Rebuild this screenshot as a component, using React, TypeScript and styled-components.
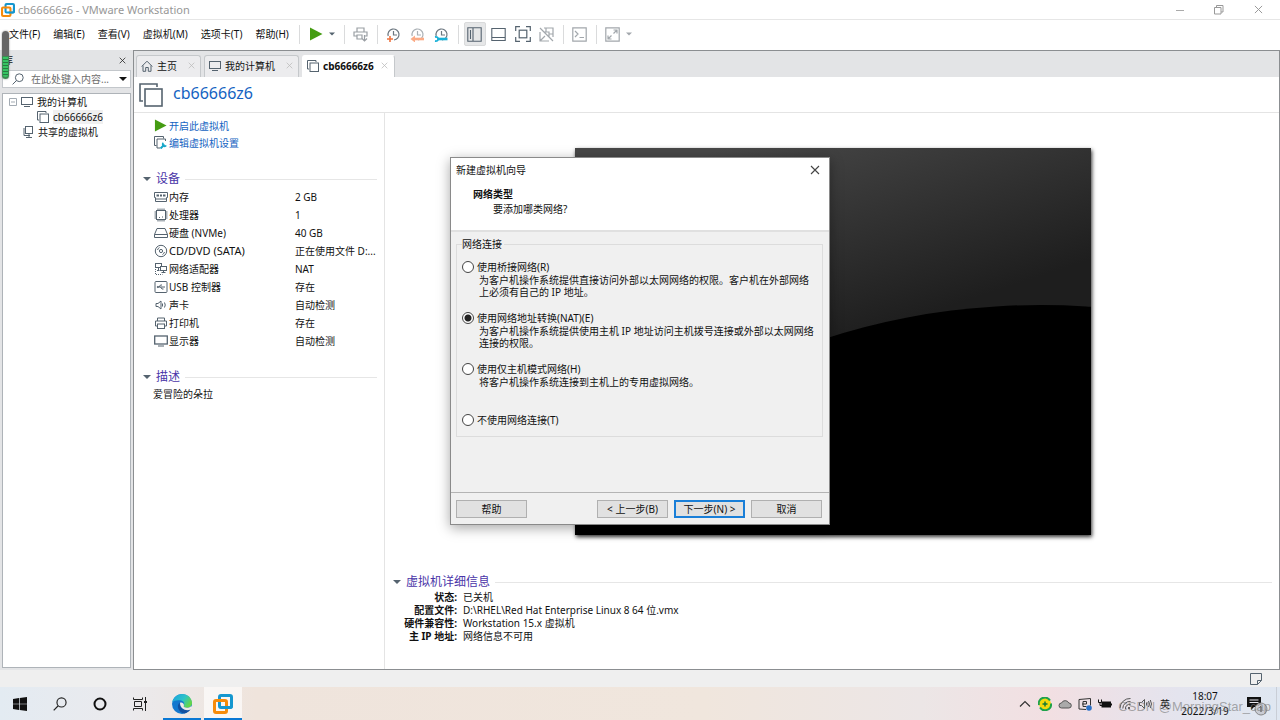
import React from "react";
import styled, { createGlobalStyle } from "styled-components";

const INK = "#55636f";
const FONT = '"Noto Sans", "Noto Sans CJK SC", sans-serif';

const GlobalStyle = createGlobalStyle`
  * { box-sizing: border-box; }
  body {
    margin: 0;
    background: #fff;
    color: #111;
    font-family: ${FONT};
    font-size: 10px;
    line-height: 14px;
  }
  button, input, select { font-family: inherit; font-size: inherit; line-height: inherit; color: inherit; }
  h1, h2, p { margin: 0; font-weight: 400; }
  svg { display: block; flex: none; }
`;

const Desktop = styled.div`
  position: relative;
  display: flex;
  flex-direction: column;
  min-height: 100vh;
`;

const PlainButton = styled.button`
  display: flex;
  align-items: center;
  justify-content: center;
  border: 0;
  padding: 0;
  background: none;
  white-space: nowrap;
`;

/* ---------- title bar ---------- */
const TitleBar = styled.header`
  display: flex;
  align-items: center;
  height: 20px;
  padding: 0 10px 0 1px;
  gap: 3px;
  border-bottom: 1px solid #e6e6e6;
  color: #979797;
`;
const WindowTitle = styled.h1`
  flex: 1;
  font-size: 11px;
  line-height: 14px;
`;
const WindowControls = styled.div`
  display: flex;
  gap: 15px;
`;
const WindowButton = styled(PlainButton)`
  width: 24px;
  height: 18px;
`;

/* ---------- menu and tool bar ---------- */
const CommandBar = styled.div`
  display: flex;
  align-items: center;
  height: 30px;
  padding: 0 0 2px 9px;
`;
const MenuBar = styled.nav`
  display: flex;
  gap: 13px;
  margin-right: 6px;
`;
const ToolBar = styled.div`
  display: flex;
  align-items: center;
`;
const ToolButton = styled(PlainButton)<{ $on?: boolean }>`
  width: 22px;
  height: 24px;
  margin: 0 1px;
  border-radius: 2px;
  border: 1px solid ${(p) => (p.$on ? "#d9dadb" : "transparent")};
  background: ${(p) => (p.$on ? "#e6e7e8" : "none")};
`;
const CaretButton = styled(PlainButton)`
  width: 8px;
  height: 20px;
  margin-right: 4px;
`;
const Separator = styled.span`
  width: 1px;
  height: 19px;
  margin: 0 4px;
  background: #dadbdc;
`;

/* ---------- frame ---------- */
const Body = styled.div`
  display: flex;
  flex: 1;
  background: #e3e4e6;
`;
const Sidebar = styled.aside`
  display: flex;
  flex-direction: column;
  width: 133px;
  padding: 0 2px 2px;
`;
const SidebarHead = styled.div`
  display: flex;
  align-items: center;
  justify-content: space-between;
  height: 20px;
  padding: 0 5px 0 1px;
`;
const SearchBox = styled.label`
  display: flex;
  align-items: center;
  height: 18px;
  padding: 0 3px 0 9px;
  gap: 4px;
  border: 1px solid #c3c7cb;
  background: #fff;
`;
const SearchInput = styled.input`
  flex: 1;
  min-width: 0;
  padding: 0 0 0 3px;
  border: 0;
  outline: 0;
  background: none;
  &::placeholder { color: #6d6d6d; opacity: 1; }
`;
const Tree = styled.ul`
  flex: 1;
  margin: 5px 0 0;
  padding: 0;
  list-style: none;
  border: 1px solid #aeb3b8;
  background: #fff;
`;
const TreeItem = styled.li<{ $indent: number }>`
  display: flex;
  align-items: center;
  height: 15px;
  padding-left: ${(p) => p.$indent}px;
  gap: 4px;
`;
const TreeName = styled.span<{ $selected?: boolean }>`
  background: ${(p) => (p.$selected ? "#f0f0f0" : "none")};
`;
const RecorderMeter = styled.div`
  position: absolute;
  left: 2px;
  top: 31px;
  width: 7px;
  height: 48px;
  border-radius: 4px;
  background: linear-gradient(#666 0 25px, #3d8a52 25px);
  box-shadow: 0 0 2px #8a8a8a;
`;
const MeterBars = styled.div`
  margin: 26px 1px 0;
  height: 20px;
  border-radius: 0 0 3px 3px;
  background: repeating-linear-gradient(#35c463 0 2px, #287a41 2px 3px);
`;

/* ---------- work area ---------- */
const Workspace = styled.main`
  display: flex;
  flex: 1;
  flex-direction: column;
  min-width: 0;
  border: 1px solid #8b8e91;
  background: #fff;
`;
const TabStrip = styled.div`
  display: flex;
  align-items: flex-end;
  height: 26px;
  gap: 3px;
  padding-left: 2px;
  background: #e3e4e6;
`;
const Tab = styled.div<{ $active?: boolean }>`
  display: flex;
  align-items: center;
  height: 22px;
  padding: 0 2px 2px 4px;
  gap: ${(p) => (p.$active ? 4 : 7)}px;
  border: 1px solid ${(p) => (p.$active ? "#fff" : "#c5c8cb")};
  border-right-color: #c5c8cb;
  border-bottom: 0;
  border-radius: 3px 3px 0 0;
  background: ${(p) => (p.$active ? "#fff" : "#ececee")};
  font-weight: ${(p) => (p.$active ? 700 : 400)};
`;
const TabName = styled(PlainButton)`
  gap: 4px;
  font-weight: inherit;
`;
const TabClose = styled(PlainButton)`
  width: 14px;
  height: 14px;
`;
const VmHeader = styled.div`
  display: flex;
  align-items: center;
  height: 36px;
  padding: 0 5px;
  gap: 10px;
  border-bottom: 1px solid #e4e4e4;
`;
const VmName = styled.h2`
  font-size: 16px;
  line-height: 20px;
  padding-bottom: 4px;
  color: #1463c2;
`;
const Columns = styled.div`
  display: flex;
  flex: 1;
`;
const InfoColumn = styled.section`
  width: 251px;
  padding: 4px 7px 0 9px;
  border-right: 1px solid #e4e4e4;
`;
const Commands = styled.div`
  display: flex;
  flex-direction: column;
  padding-left: 11px;
`;
const CommandLink = styled.a`
  display: flex;
  align-items: center;
  height: 17px;
  gap: 2px;
  color: #1463c2;
  text-decoration: none;
`;
const SectionTitle = styled.h2`
  display: flex;
  align-items: center;
  height: 18px;
  gap: 5px;
  font-size: 12px;
  line-height: 18px;
  color: #4a35a8;
  &::after {
    content: "";
    flex: 1;
    height: 1px;
    background: #e6e6e6;
  }
`;
const Section = styled.div<{ $top: number }>`
  margin-top: ${(p) => p.$top}px;
`;
const DeviceTable = styled.table`
  width: 100%;
  border-collapse: collapse;
  th, td { height: 18px; padding: 0; text-align: left; font-weight: 400; white-space: nowrap; }
  th { width: 151px; padding-left: 11px; }
  td { padding-left: 1px; }
`;
const DeviceName = styled.span<{ $latin: boolean }>`
  display: flex;
  align-items: center;
  gap: 1px;
  font-size: ${(p) => (p.$latin ? 11 : 10)}px;
`;
const Description = styled.p`
  padding: 1px 0 0 10px;
`;
const PreviewColumn = styled.section`
  display: flex;
  flex: 1;
  flex-direction: column;
  justify-content: space-between;
  padding: 35px 7px 26px 8px;
`;
const Screen = styled.div`
  align-self: center;
  width: 516px;
  height: 387px;
  background: #000;
  box-shadow: 1px 2px 4px #333;
`;
const DetailTable = styled.table`
  border-collapse: collapse;
  th, td { height: 13px; padding: 0; line-height: 13px; text-align: left; white-space: nowrap; }
  th { width: 64px; text-align: right; font-weight: 700; }
  td { padding-left: 6px; }
`;

/* ---------- wizard ---------- */
const Wizard = styled.form`
  position: absolute;
  top: 157px;
  left: calc(50% - 190px);
  width: 380px;
  border: 1px solid #8a8a8a;
  background: #f0f0f0;
  box-shadow: 0 3px 12px rgba(0, 0, 0, 0.35);
`;
const WizardHead = styled.div`
  padding: 4px 5px 13px;
  border-bottom: 2px solid #e0e0e0;
  background: #fff;
`;
const WizardCaption = styled.div`
  display: flex;
  align-items: center;
  justify-content: space-between;
  height: 16px;
  padding-right: 4px;
`;
const WizardTitle = styled.h2`
  margin: 9px 0 0 17px;
  font-size: 10px;
  line-height: 15px;
  font-weight: 700;
`;
const WizardHint = styled.p`
  padding-left: 37px;
  line-height: 15px;
`;
const Options = styled.fieldset`
  margin: 5px 6px 55px 5px;
  padding: 9px 0 9px 5px;
  border: 1px solid #dcdcdc;
`;
const Legend = styled.legend`
  padding: 0 2px 0 0;
`;
const Option = styled.div<{ $last?: boolean }>`
  height: ${(p) => (p.$last ? 14 : 51)}px;
`;
const OptionLabel = styled.label`
  display: flex;
  align-items: center;
  gap: 3px;
`;
const Radio = styled.input`
  appearance: none;
  width: 12px;
  height: 12px;
  margin: 0;
  border: 1px solid #444;
  border-radius: 50%;
  background: #fff;
  &:checked { background: radial-gradient(circle, #222 0 3px, #fff 4px); }
`;
const OptionText = styled.p`
  padding-left: 17px;
  line-height: 12px;
  white-space: nowrap;
`;
const WizardFoot = styled.div`
  display: flex;
  gap: 6px;
  padding: 7px 7px 6px 5px;
  border-top: 1px solid #b4b4b4;
`;
const WizardButton = styled(PlainButton)<{ $primary?: boolean; $apart?: boolean }>`
  width: 71px;
  height: 18px;
  margin-right: ${(p) => (p.$apart ? "auto" : 0)};
  border: ${(p) => (p.$primary ? "2px solid #1a7fd8" : "1px solid #b0b0b0")};
  background: #e1e1e1;
`;

/* ---------- bottom bars ---------- */
const StatusBar = styled.div`
  display: flex;
  align-items: center;
  justify-content: flex-end;
  height: 17px;
  padding-right: 18px;
  background: #efefef;
`;
const TaskBar = styled.footer`
  position: relative;
  display: flex;
  height: 33px;
  padding-right: 3px;
  background: linear-gradient(90deg, #e3ebf2 0, #ebeaed 10%, #efe4dc 20%, #f0e6dd 55%, #ece6e6 72%, #f2dfe2 82%, #e4e4ee 92%, #dfe7f1 100%);
`;
const TaskButton = styled(PlainButton)<{ $open?: boolean; $front?: boolean }>`
  width: ${(p) => (p.$open ? 38 : 40)}px;
  margin-left: ${(p) => (p.$open ? 3 : 0)}px;
  border-top: 2px solid transparent;
  border-bottom: 2px solid ${(p) => (p.$open ? "#0a78d4" : "transparent")};
  background: ${(p) => (p.$front ? "rgba(255,255,255,.65)" : "none")};
`;
const Tray = styled.div`
  display: flex;
  align-items: center;
  margin-left: auto;
`;
const TrayButton = styled(PlainButton)`
  width: 20px;
  height: 33px;
`;
const Clock = styled.time`
  width: 60px;
  font-size: 10px;
  line-height: 15px;
  text-align: center;
`;
const NoticeButton = styled(PlainButton)`
  width: 42px;
  border-right: 1px solid #c9ced6;
  height: 33px;
`;
const Watermark = styled.span`
  position: absolute;
  right: 9px;
  bottom: 4px;
  font-family: "Liberation Sans", sans-serif;
  font-size: 13px;
  line-height: 18px;
  color: rgba(120, 120, 120, 0.62);
`;

/* ---------- drawings ---------- */
type IconProps = { w?: number; h?: number; box?: string; color?: string; sw?: number; children: React.ReactNode };
const Icon = ({ w = 14, h = w, box = `0 0 ${w} ${h}`, color = INK, sw = 1, children }: IconProps) => (
  <svg width={w} height={h} viewBox={box} fill="none" stroke={color} strokeWidth={sw} aria-hidden="true">
    {children}
  </svg>
);
const VmwareLogo = ({ size = 14 }: { size?: number }) => (
  <Icon w={size} box="0 0 20 20" sw={3}>
    <rect x="6.5" y="1.5" width="12" height="12" rx="1.5" stroke="#1597cf" />
    <rect x="1.5" y="6.5" width="12" height="12" rx="1.5" stroke="#f68b0b" />
    <path d="M18.500 8v4a1.500 1.500 0 0 1-1.500 1.500h-6" stroke="#1597cf" />
  </Icon>
);
const Cross = ({ size, color }: { size: number; color: string }) => (
  <Icon w={size} box="0 0 10 10" color={color} sw={1.1}>
    <path d="M1 1l8 8M9 1l-8 8" />
  </Icon>
);
const Caret = ({ color = INK, w = 8 }: { color?: string; w?: number }) => (
  <Icon w={w} h={4} box="0 0 8 4" color="none">
    <path d="M0 0h8L4 4z" fill={color} />
  </Icon>
);
const Play = ({ size }: { size: number }) => (
  <Icon w={size} box="0 0 14 14" color="none">
    <path d="M1 .5v13L13.500 7z" fill="#459c12" />
  </Icon>
);
const VmIcon = ({ size = 12, sw = 1 }: { size?: number; sw?: number }) => (
  <Icon w={size} box="0 0 12 12" sw={sw}>
    <path d="M2 9H.5V.5H9V2" />
    <rect x="3" y="3" width="8.500" height="8.500" />
  </Icon>
);
const MonitorIcon = ({ w = 12 }: { w?: number }) => (
  <Icon w={w} h={11} box="0 0 12 11">
    <rect x=".5" y="1.500" width="11" height="7" />
    <path d="M3 10.500h6" />
  </Icon>
);
const SharedIcon = () => (
  <Icon w={11} h={12}>
    <rect x="2.500" y=".5" width="7" height="7" />
    <path d="M1 2v7.500h6M6 7.500v4M3 11.500h6" />
  </Icon>
);
const HomeIcon = () => (
  <Icon w={12}>
    <path d="M.7 6.500L6 1.200l5.300 5.300M2 5.500v5.800h2.700V7.500h2.600v3.800H10V5.500" />
  </Icon>
);
const Lens = ({ size = 12, color = INK }: { size?: number; color?: string }) => (
  <Icon w={size} box="0 0 12 12" color={color}>
    <circle cx="7.300" cy="4.700" r="3.900" />
    <path d="M4.500 7.500L.6 11.400" />
  </Icon>
);
const SettingsVmIcon = () => (
  <Icon w={13} box="0 0 13 13">
    <path d="M2.500 9.500h-2v-9h9v2" />
    <path d="M11.500 5V3H3v9h3" />
    <path d="M6.500 12.500l4-4" stroke="#16a6c9" strokeWidth="2" />
    <path d="M9.300 6.800a2 2 0 0 0 3 2.800" stroke="#16a6c9" strokeWidth="1.500" />
  </Icon>
);
const ClockFace = ({ color, children }: { color: string; children: React.ReactNode }) => (
  <Icon w={15} color={color}>
    <path d="M2.200 9A5.500 5.500 0 1 1 8 13" strokeWidth="1.200" />
    <path d="M7.500 4v4h3.500" strokeWidth="1.200" />
    {children}
  </Icon>
);

const deviceIcons = {
  memory: (
    <Icon>
      <path d="M.5 2.500h13v5h-1v4h-11v-4h-1zM1.500 9h11" />
      <path d="M2.500 5.500h2.500M6 5.500h2M9 5.500h2.500" strokeWidth="2.200" />
    </Icon>
  ),
  cpu: (
    <Icon>
      <rect x="2.500" y="2.500" width="9" height="9" />
      <path d="M4 .5v2M6 .5v2M8 .5v2M10 .5v2M4 11.500v2M6 11.500v2M8 11.500v2M10 11.500v2M.5 4h2M.5 6h2M.5 8h2M.5 10h2M11.500 4h2M11.500 6h2M11.500 8h2M11.500 10h2M5 9.500h1M8.500 9.500v-1" />
    </Icon>
  ),
  disk: (
    <Icon>
      <path d="M.5 8.500L3 2.500h8l2.500 6v3H.5zM.5 8.500h13" />
    </Icon>
  ),
  disc: (
    <Icon>
      <circle cx="7" cy="7" r="5.700" />
      <circle cx="7" cy="7" r="1.600" />
      <path d="M3.500 6a4 4 0 0 1 2-2.500M10.500 8a4 4 0 0 1-2 2.500" />
    </Icon>
  ),
  network: (
    <Icon>
      <rect x="1.500" y="1.500" width="6" height="4" />
      <rect x="6.500" y="4.500" width="6" height="4" fill="#fff" />
      <path d="M4.500 6v2M3 8.500h2.500M9.500 9v2M7.500 10.500h4" />
      <path d="M1.500 7v5.500h7" strokeDasharray="1 1" />
    </Icon>
  ),
  usb: (
    <Icon>
      <rect x="1" y="1.500" width="12" height="11" rx="1" />
      <path d="M3.500 7H11M5 7l1.500-2H8M6.500 7L8 9h1.500" />
      <circle cx="3.800" cy="7" r=".6" fill={INK} />
    </Icon>
  ),
  sound: (
    <Icon>
      <path d="M2 5.500h2L7 3v8L4 8.500H2zM8.500 5.500v3M10.500 4.500q1.500 2.500 0 5" />
    </Icon>
  ),
  printer: (
    <Icon>
      <path d="M3.500 5V2h7v3M3.500 10H1.500V5h11v5h-2" />
      <rect x="3.500" y="8" width="7" height="4.500" />
    </Icon>
  ),
  display: (
    <Icon>
      <rect x=".7" y="2" width="12.600" height="8" strokeWidth="1.300" />
      <path d="M4 12h6" />
    </Icon>
  ),
};

const menus = ["文件(F)", "编辑(E)", "查看(V)", "虚拟机(M)", "选项卡(T)", "帮助(H)"];
const devices: { icon: keyof typeof deviceIcons; name: string; value: string }[] = [
  { icon: "memory", name: "内存", value: "2 GB" },
  { icon: "cpu", name: "处理器", value: "1" },
  { icon: "disk", name: "硬盘 (NVMe)", value: "40 GB" },
  { icon: "disc", name: "CD/DVD (SATA)", value: "正在使用文件 D:..." },
  { icon: "network", name: "网络适配器", value: "NAT" },
  { icon: "usb", name: "USB 控制器", value: "存在" },
  { icon: "sound", name: "声卡", value: "自动检测" },
  { icon: "printer", name: "打印机", value: "存在" },
  { icon: "display", name: "显示器", value: "自动检测" },
];
const isLatin = (text: string) => /^[\x20-\x7e]+$/.test(text);
const details = [
  ["状态:", "已关机"],
  ["配置文件:", "D:\\RHEL\\Red Hat Enterprise Linux 8 64 位.vmx"],
  ["硬件兼容性:", "Workstation 15.x 虚拟机"],
  ["主 IP 地址:", "网络信息不可用"],
];
const networkOptions = [
  { id: "bridged", label: "使用桥接网络(R)", lines: ["为客户机操作系统提供直接访问外部以太网网络的权限。客户机在外部网络", "上必须有自己的 IP 地址。"] },
  { id: "nat", label: "使用网络地址转换(NAT)(E)", lines: ["为客户机操作系统提供使用主机 IP 地址访问主机拨号连接或外部以太网网络", "连接的权限。"] },
  { id: "hostonly", label: "使用仅主机模式网络(H)", lines: ["将客户机操作系统连接到主机上的专用虚拟网络。"] },
  { id: "none", label: "不使用网络连接(T)", lines: [] },
];

const MainTools = () => (
  <ToolBar>
    <Separator />
    <ToolButton aria-label="开启"><Play size={14} /></ToolButton>
    <CaretButton aria-label="电源选项"><Caret w={6} /></CaretButton>
    <Separator />
    <ToolButton aria-label="发送">
      <Icon w={15} color="#9a9fa4" sw={1.2}>
        <path d="M4 5V1h7v4M4 9H1V5h13v4h-3M4 8h5v4H4zM11.500 8v6M9 11.500l2.500 2.500 2.500-2.500" />
      </Icon>
    </ToolButton>
    <Separator />
    <ToolButton aria-label="拍摄快照"><ClockFace color="#6c7780"><path d="M4 9v6M1 12h6" stroke="#ef7440" strokeWidth="1.600" /></ClockFace></ToolButton>
    <ToolButton aria-label="恢复快照"><ClockFace color="#aab0b5"><path d="M14 12H4" stroke="#fbab86" strokeWidth="2.600" /><path d="M5 8.500v7L.5 12z" fill="#fbab86" stroke="none" /></ClockFace></ToolButton>
    <ToolButton aria-label="管理快照"><ClockFace color="#6c7780"><path d="M4 12h9.500" stroke="#19b1d8" strokeWidth="2.600" /><path d="M1 10q3-.5 3 2T1 14" stroke="#19b1d8" strokeWidth="1.800" /></ClockFace></ToolButton>
    <Separator />
    <ToolButton $on aria-label="显示库"><Icon w={15} sw={1.1}><path d="M.8.8h13.400v13.400H.8zM3.500 3v9M6 1v13" /></Icon></ToolButton>
    <ToolButton aria-label="显示缩略图"><Icon w={15} sw={1.1}><path d="M.8 1.500h13.400v12H.8zM1 10.500h13" /></Icon></ToolButton>
    <ToolButton aria-label="全屏"><Icon w={16} sw={1.2}><path d="M.7 5V.7H5M11 .7h4.300V5M15.300 11v4.300H11M5 15.300H.7V11" /><rect x="4.200" y="4.200" width="7.600" height="7.600" /></Icon></ToolButton>
    <ToolButton aria-label="Unity"><Icon w={15} color="#a2a7ac" sw={1.200}><path d="M5 1h9v9M10 14H1V5M5 5h5v5M1 1l13 13M1 14l5-5M7 1v4M14 7h-4" /></Icon></ToolButton>
    <Separator />
    <ToolButton aria-label="控制台"><Icon w={15} color="#a2a7ac" sw={1.200}><path d="M.8.8h13.400v13.400H.8zM3 4l3 3-3 3M7.500 10.500H12" /></Icon></ToolButton>
    <Separator />
    <ToolButton aria-label="自动适应"><Icon w={15} color="#a2a7ac" sw={1.200}><path d="M.8.8h13.400v13.400H.8zM8.500 6.500L12 3M8.500 3H12v3.500M6.500 8.500L3 12M3 8.500V12h3.500" /></Icon></ToolButton>
    <CaretButton aria-label="适应选项"><Caret w={6} color="#a2a7ac" /></CaretButton>
  </ToolBar>
);

const PreviewImage = () => (
  <svg width="100%" height="100%" viewBox="0 0 516 387" role="img" aria-label="虚拟机屏幕">
    <defs>
      <linearGradient id="sky" gradientUnits="userSpaceOnUse" x1="180" y1="-10" x2="250" y2="200">
        <stop offset="0" stopColor="#474747" />
        <stop offset="1" stopColor="#1e1e1e" />
      </linearGradient>
      <clipPath id="frame"><rect width="516" height="387" /></clipPath>
    </defs>
    <g clipPath="url(#frame)">
      <rect width="516" height="387" fill="url(#sky)" />
      <ellipse cx="466" cy="445" rx="460" ry="288" fill="#000" />
      <rect y="300" width="516" height="87" fill="#000" />
    </g>
  </svg>
);

const NetworkWizard = () => (
  <Wizard onSubmit={(e) => e.preventDefault()}>
    <WizardHead>
      <WizardCaption>
        <span>新建虚拟机向导</span>
        <PlainButton type="button" aria-label="关闭"><Cross size={10} color="#444" /></PlainButton>
      </WizardCaption>
      <WizardTitle>网络类型</WizardTitle>
      <WizardHint>要添加哪类网络?</WizardHint>
    </WizardHead>
    <Options>
      <Legend>网络连接</Legend>
      {networkOptions.map((o) => (
        <Option key={o.id} $last={o.id === "none"}>
          <OptionLabel>
            <Radio type="radio" name="network" value={o.id} defaultChecked={o.id === "nat"} />
            {o.label}
          </OptionLabel>
          {o.lines.map((line) => <OptionText key={line}>{line}</OptionText>)}
        </Option>
      ))}
    </Options>
    <WizardFoot>
      <WizardButton type="button" $apart>帮助</WizardButton>
      <WizardButton type="button">&lt; 上一步(B)</WizardButton>
      <WizardButton type="submit" $primary>下一步(N) &gt;</WizardButton>
      <WizardButton type="button">取消</WizardButton>
    </WizardFoot>
  </Wizard>
);

const WindowsTaskBar = () => (
  <TaskBar>
    <TaskButton aria-label="开始">
      <Icon w={14} color="none"><path d="M0 2l6-.9v5.600H0zM6.700 1L14 0v6.700H6.700zM0 7.300h6v5.600L0 12zM6.700 7.300H14V14l-7.300-1z" fill="#111" /></Icon>
    </TaskButton>
    <TaskButton aria-label="搜索"><Lens size={14} color="#222" /></TaskButton>
    <TaskButton aria-label="Cortana"><Icon w={14} color="#111" sw={2}><circle cx="7" cy="7" r="5.500" /></Icon></TaskButton>
    <TaskButton aria-label="任务视图">
      <Icon w={14} color="#222"><path d="M.5.5v2h9v-2M.5 13.500v-2h9v2M1.500 4.500h7v5h-7zM12.500 0v14" /><path d="M11 5h3" strokeWidth="2" /></Icon>
    </TaskButton>
    <TaskButton $open aria-label="Edge">
      <svg width="20" height="20" viewBox="0 0 20 20" aria-hidden="true">
        <defs>
          <linearGradient id="edgeTop" x1="0" y1="0" x2="1" y2="0.500">
            <stop offset="0" stopColor="#1a9fe0" /><stop offset=".6" stopColor="#2cc3c8" /><stop offset="1" stopColor="#63d64a" />
          </linearGradient>
        </defs>
        <circle cx="10" cy="10" r="10" fill="#1378cf" />
        <path d="M.2 8.500C1.200 3.500 5.200 0 10 0c5.700 0 10 4 10 8.800 0 3.200-2.300 5-5.200 5-2.300 0-3.600-1-3-1.900.9-1.300.8-4.500-2.600-5.300C5.500 5.700 1.800 6.500.2 8.500z" fill="url(#edgeTop)" />
        <path d="M7.800 8.500C4 11 6 18.500 12.500 19.600c2.800-.8 4.900-2.300 6.200-4.800-4.200 2.200-11.500.6-10.900-6.300z" fill="#1250a0" />
        <path d="M8 8.800c1.600-1.200 4.600.6 3.800 3.100-.6.9.7 1.900 3 1.900 1.500 0 3-.5 4.200-1.500l1.500.8c-.5 1.300-1 1.800-1.800 2.400-4.500 1.900-10.700-.3-10.700-6.700z" fill="#efe8e6" />
      </svg>
    </TaskButton>
    <TaskButton $open $front aria-label="VMware Workstation"><VmwareLogo size={20} /></TaskButton>
    <Tray>
      <TrayButton aria-label="显示隐藏的图标"><Icon w={12} color="#333" sw={1.200}><path d="M1 8.500l5-5 5 5" /></Icon></TrayButton>
      <TrayButton aria-label="360"><Icon w={14}><circle cx="7" cy="7" r="6" fill="#f5d90c" stroke="none" /><path d="M1 8A6 6 0 0 1 12 3.500M13 6.500A6 6 0 0 1 2 10.500" stroke="#1fa24a" strokeWidth="2" /><path d="M7 4.500v5M4.500 7h5" stroke="#147a34" strokeWidth="1.500" /></Icon></TrayButton>
      <TrayButton aria-label="OneDrive"><Icon w={14} color="#555"><path d="M3.500 11a2.500 2.500 0 0 1 0-5 4 4 0 0 1 7.300 0 2.500 2.500 0 0 1 0 5z" fill="#aaa" /></Icon></TrayButton>
      <TrayButton aria-label="输入面板"><Icon w={14} color="#333"><path d="M1 2.500l11.500-1v7M1 2.500v9.500l7 .5" /><path d="M4 7h4.500V4.500H5V9.500h3.500" /><circle cx="11" cy="11" r="2.800" fill="#2a70c8" stroke="none" /></Icon></TrayButton>
      <TrayButton aria-label="电池"><Icon w={14} color="#111"><rect x="4" y="5" width="8.500" height="5" fill="#111" /><path d="M13.500 6.500v2M.5 2.500v3h3v-3M2 5.500v3h2" /></Icon></TrayButton>
      <TrayButton aria-label="网络"><Icon w={13} color="#555"><path d="M1 11A10 10 0 0 1 11.500 1.500M3.800 11.500a7 7 0 0 1 7.700-7M6.500 12a4 4 0 0 1 5-4.500" /><circle cx="10" cy="11" r="1" fill="#333" stroke="none" /></Icon></TrayButton>
      <TrayButton aria-label="音量"><Icon w={14} color="#555"><path d="M1.500 5.500h2l3-3v9l-3-3h-2zM8.500 5.500v3M10.500 4q2 3 0 6M12.300 3q2.400 4 0 8" /></Icon></TrayButton>
      <TrayButton aria-label="输入法">英</TrayButton>
      <Clock>18:07<br />2022/3/19</Clock>
      <NoticeButton aria-label="1 条通知">
        <Icon w={24} h={24} color="none">
          <path d="M3 5h14v10h-7l-3 3v-3H3z" fill="#111" />
          <path d="M5.500 8h9M5.500 10.500h9" stroke="#e6e6ee" />
          <circle cx="17" cy="17" r="6" fill="#c9ccd4" stroke="#888" />
          <path d="M15.500 15.500l1.500-1V20" stroke="#444" />
        </Icon>
      </NoticeButton>
    </Tray>
    <Watermark>CSDN @MorningStar_cap</Watermark>
  </TaskBar>
);

export default function App() {
  return (
    <Desktop>
      <GlobalStyle />
      <TitleBar>
        <VmwareLogo />
        <WindowTitle>cb66666z6 - VMware Workstation</WindowTitle>
        <WindowControls>
          <WindowButton aria-label="最小化"><Icon w={10} color="#aaa"><path d="M1 5.500h8" /></Icon></WindowButton>
          <WindowButton aria-label="还原"><Icon w={10} color="#999"><path d="M.5 2.500h6.500V9H.5zM2.500 2.500v-2h6.500V7H7" /></Icon></WindowButton>
          <WindowButton aria-label="关闭"><Cross size={9} color="#999" /></WindowButton>
        </WindowControls>
      </TitleBar>
      <CommandBar>
        <MenuBar>{menus.map((m) => <PlainButton key={m}>{m}</PlainButton>)}</MenuBar>
        <MainTools />
      </CommandBar>
      <Body>
        <Sidebar>
          <SidebarHead>
            <span>库</span>
            <PlainButton aria-label="关闭库"><Cross size={7} color="#222" /></PlainButton>
          </SidebarHead>
          <SearchBox>
            <Lens />
            <SearchInput type="text" aria-label="搜索库" placeholder="在此处键入内容..." />
            <PlainButton aria-label="搜索选项"><Caret color="#111" /></PlainButton>
          </SearchBox>
          <Tree>
            <TreeItem $indent={6}>
              <Icon w={8} color="#a3abb3"><path d="M.5.5h7v7h-7zM2 4h4" /></Icon>
              <MonitorIcon />
              <TreeName>我的计算机</TreeName>
            </TreeItem>
            <TreeItem $indent={34}>
              <VmIcon />
              <TreeName $selected>cb66666z6</TreeName>
            </TreeItem>
            <TreeItem $indent={20}>
              <SharedIcon />
              <TreeName>共享的虚拟机</TreeName>
            </TreeItem>
          </Tree>
        </Sidebar>
        <Workspace>
          <TabStrip>
            <Tab>
              <TabName><HomeIcon />主页</TabName>
              <TabClose aria-label="关闭主页"><Cross size={7} color="#bbb" /></TabClose>
            </Tab>
            <Tab>
              <TabName><MonitorIcon />我的计算机</TabName>
              <TabClose aria-label="关闭我的计算机"><Cross size={7} color="#bbb" /></TabClose>
            </Tab>
            <Tab $active>
              <TabName><VmIcon />cb66666z6</TabName>
              <TabClose aria-label="关闭 cb66666z6"><Cross size={7} color="#bbb" /></TabClose>
            </Tab>
          </TabStrip>
          <VmHeader>
            <VmIcon size={24} sw={0.8} />
            <VmName>cb66666z6</VmName>
          </VmHeader>
          <Columns>
            <InfoColumn>
              <Commands>
                <CommandLink href="#power"><Play size={13} />开启此虚拟机</CommandLink>
                <CommandLink href="#settings"><SettingsVmIcon />编辑虚拟机设置</CommandLink>
              </Commands>
              <Section $top={19}>
                <SectionTitle><Caret />设备</SectionTitle>
                <DeviceTable>
                  <tbody>
                    {devices.map((d) => (
                      <tr key={d.name}>
                        <th scope="row"><DeviceName $latin={isLatin(d.name)}>{deviceIcons[d.icon]}{d.name}</DeviceName></th>
                        <td>{d.value}</td>
                      </tr>
                    ))}
                  </tbody>
                </DeviceTable>
              </Section>
              <Section $top={18}>
                <SectionTitle><Caret />描述</SectionTitle>
                <Description>爱冒险的朵拉</Description>
              </Section>
            </InfoColumn>
            <PreviewColumn>
              <Screen><PreviewImage /></Screen>
              <div>
                <SectionTitle><Caret />虚拟机详细信息</SectionTitle>
                <DetailTable>
                  <tbody>
                    {details.map(([k, v]) => (
                      <tr key={k}><th scope="row">{k}</th><td>{v}</td></tr>
                    ))}
                  </tbody>
                </DetailTable>
              </div>
            </PreviewColumn>
          </Columns>
        </Workspace>
      </Body>
      <StatusBar>
        <Icon w={12}><path d="M.5.5h11v7l-4 4h-7zM11.500 7.500h-4v4" /></Icon>
      </StatusBar>
      <WindowsTaskBar />
      <RecorderMeter><MeterBars /></RecorderMeter>
      <NetworkWizard />
    </Desktop>
  );
}
